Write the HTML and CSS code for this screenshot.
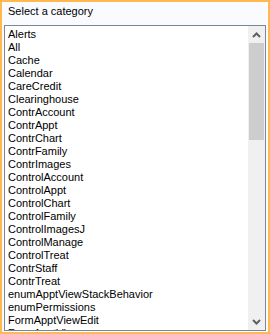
FILE: index.html
```html
<!DOCTYPE html>
<html lang="en">
<head>
    <meta charset="UTF-8">
    <meta name="viewport" content="width=device-width, initial-scale=1.0">
    <title>Select a category</title>
    <link rel="stylesheet" href="styles.css">
</head>
<body>
    <div class="window">
        <div class="caption">Select a category</div>
        <div class="listbox">
            <ul class="items">
                <li>Alerts</li>
                <li>All</li>
                <li>Cache</li>
                <li>Calendar</li>
                <li>CareCredit</li>
                <li>Clearinghouse</li>
                <li>ContrAccount</li>
                <li>ContrAppt</li>
                <li>ContrChart</li>
                <li>ContrFamily</li>
                <li>ContrImages</li>
                <li>ControlAccount</li>
                <li>ControlAppt</li>
                <li>ControlChart</li>
                <li>ControlFamily</li>
                <li>ControlImagesJ</li>
                <li>ControlManage</li>
                <li>ControlTreat</li>
                <li>ContrStaff</li>
                <li>ContrTreat</li>
                <li>enumApptViewStackBehavior</li>
                <li>enumPermissions</li>
                <li>FormApptViewEdit</li>
                <li>FormApptViews</li>
            </ul>
            <div class="scrollbar">
                <div class="scroll-btn">
                    <svg width="9" height="6" viewBox="0 0 9 6"><path d="M1 5 L4.5 1.5 L8 5" fill="none" stroke="#606060" stroke-width="2"/></svg>
                </div>
                <div class="track">
                    <div class="thumb"></div>
                </div>
                <div class="scroll-btn">
                    <svg width="9" height="6" viewBox="0 0 9 6"><path d="M1 1 L4.5 4.5 L8 1" fill="none" stroke="#606060" stroke-width="2"/></svg>
                </div>
            </div>
        </div>
    </div>
</body>
</html>
```

FILE: styles.css
```css
* {
    margin: 0;
    padding: 0;
    box-sizing: border-box;
}

body {
    font-family: 'Liberation Sans', Arial, sans-serif;
    font-size: 11px;
    color: #000;
    background: #fff;
}

.window {
    width: 270px;
    height: 334px;
    border: 2px solid #ffb94f;
    background: #f9fbff;
    padding: 2px 2px 1px 2px;
    display: flex;
    flex-direction: column;
}

.caption {
    height: 21px;
    padding: 1px 0 0 4px;
    line-height: 13px;
}

.listbox {
    flex: 1;
    width: 262px;
    border: 1px solid #7a8795;
    background: #fff;
    display: flex;
    overflow: hidden;
}

.items {
    list-style: none;
    flex: 1;
    padding: 2px 0 0 3px;
    overflow: hidden;
}

.items li {
    height: 13px;
    line-height: 13px;
    white-space: nowrap;
}

.scrollbar {
    width: 17px;
    background: #f0f0f0;
    display: flex;
    flex-direction: column;
}

.scroll-btn {
    height: 17px;
    display: flex;
    align-items: center;
    justify-content: center;
}

.track {
    flex: 1;
}

.thumb {
    height: 97px;
    margin: 0 1px;
    background: #cdcdcd;
}
```
